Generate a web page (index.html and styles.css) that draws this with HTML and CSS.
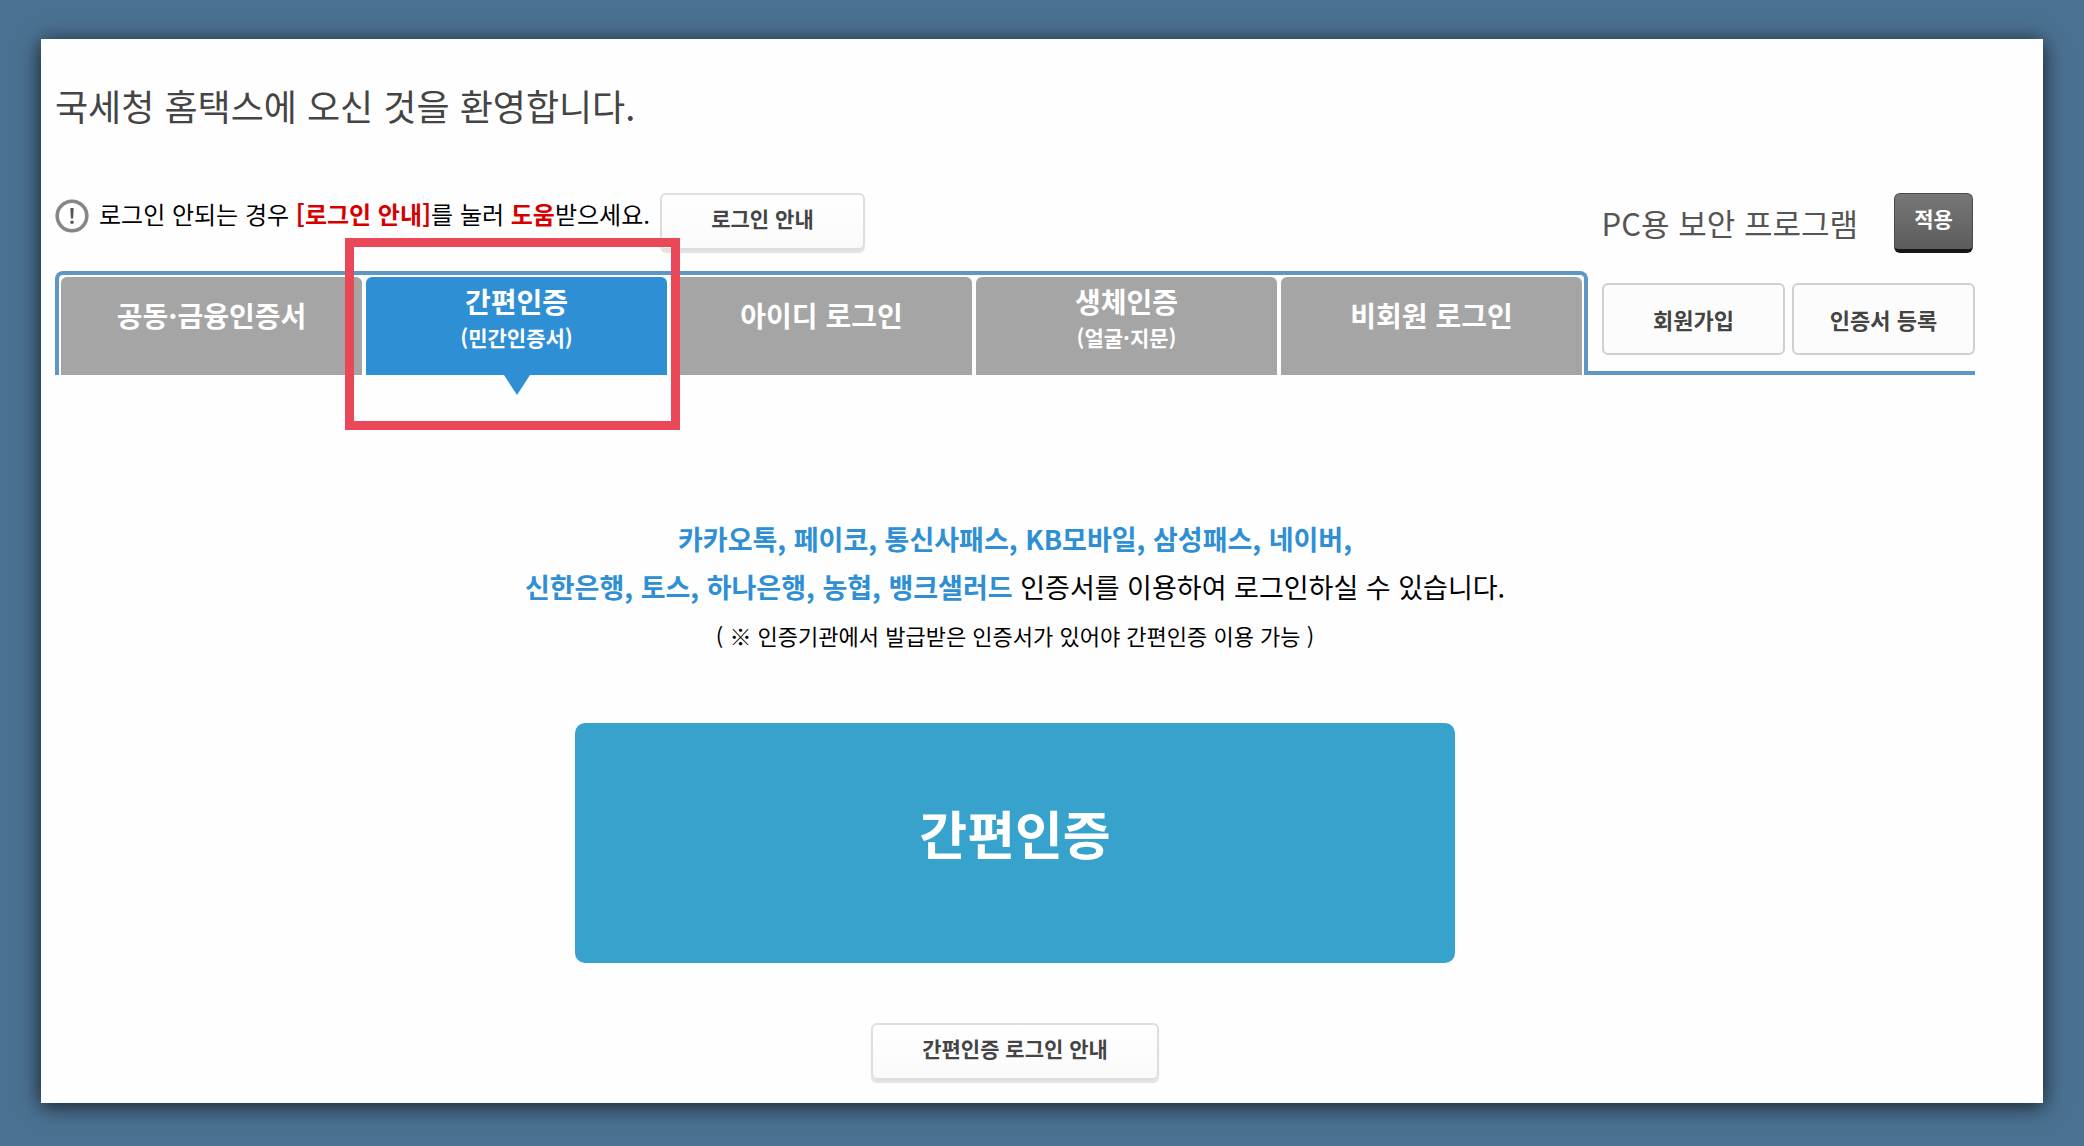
FILE: index.html
```html
<!DOCTYPE html>
<html lang="ko">
<head>
<meta charset="utf-8">
<title>국세청 홈택스 로그인</title>
<link rel="stylesheet" href="styles.css">
</head>
<body>
<main class="card">
  <h1 class="title">국세청 홈택스에 오신 것을 환영합니다.</h1>

  <div class="notice">
    <div class="notice-message">
      <svg class="notice-icon" viewBox="0 0 34 34" aria-hidden="true">
        <circle cx="17" cy="17" r="14.8" fill="none" stroke="#868686" stroke-width="3.6"/>
        <path d="M15.3 9h3.4l-.6 10.5h-2.2z" fill="#555"/>
        <circle cx="17" cy="23.3" r="1.7" fill="#555"/>
      </svg>
      <p class="notice-text">로그인 안되는 경우 <strong>[로그인 안내]</strong>를 눌러 <strong>도움</strong>받으세요.</p>
    </div>
    <button type="button" class="btn guide">로그인 안내</button>
    <span class="security">PC용 보안 프로그램</span>
    <button type="button" class="btn apply">적용</button>
  </div>

  <div class="tab-row">
    <div class="tabs" role="tablist">
      <button type="button" class="tab" role="tab">공동·금융인증서</button>
      <div class="tab-slot">
        <button type="button" class="tab double active" role="tab" aria-selected="true">간편인증<span class="sub">(민간인증서)</span></button>
        <span class="highlight"></span>
      </div>
      <button type="button" class="tab" role="tab">아이디 로그인</button>
      <button type="button" class="tab double" role="tab">생체인증<span class="sub">(얼굴·지문)</span></button>
      <button type="button" class="tab" role="tab">비회원 로그인</button>
    </div>
    <div class="side">
      <button type="button" class="btn join">회원가입</button>
      <button type="button" class="btn join">인증서 등록</button>
    </div>
  </div>

  <section class="panel">
    <p class="lead"><strong>카카오톡, 페이코, 통신사패스, KB모바일, 삼성패스, 네이버,</strong><br>
    <strong>신한은행, 토스, 하나은행, 농협, 뱅크샐러드</strong> 인증서를 이용하여 로그인하실 수 있습니다.</p>
    <p class="note">( ※ 인증기관에서 발급받은 인증서가 있어야 간편인증 이용 가능 )</p>
    <button type="button" class="auth">간편인증</button>
    <button type="button" class="btn guide wide">간편인증 로그인 안내</button>
  </section>
</main>
</body>
</html>
```
FILE: styles.css
```css
* {
  box-sizing: border-box;
}

body {
  margin: 0;
  padding: 39px 41px 43px;
  background: #4b7192;
  color: #000;
  font-family: "Noto Sans CJK KR", sans-serif;
}

button {
  margin: 0;
  padding: 0;
  border: 0;
  font-family: inherit;
  cursor: pointer;
}

p {
  margin: 0;
}

.card {
  padding: 42px 68px 20px 14px;
  background: #fefefe;
  box-shadow: 0 3px 20px rgba(0, 0, 0, 0.75);
}

.title {
  margin: 0;
  color: #444;
  font-size: 36px;
  font-weight: 400;
  line-height: 48px;
}

.notice {
  display: flex;
  align-items: center;
  margin-top: 64px;
}

.notice-message {
  display: flex;
  gap: 10px;
  padding-bottom: 14px;
}

.notice-icon {
  width: 34px;
  height: 34px;
}

.notice-text {
  font-size: 24px;
  line-height: 30px;
}

.notice-text strong {
  color: #d70000;
}

.btn {
  border: 2px solid #dedede;
  border-radius: 6px;
  background: linear-gradient(#fff, #fafafa);
  color: #444;
  font-size: 21px;
  font-weight: 700;
}

.guide {
  width: 205px;
  height: 57px;
  margin: 0 0 3px 10px;
  padding-bottom: 8px;
  box-shadow: 0 3px 1px #e3e3e3;
}

.security {
  margin-left: auto;
  color: #555;
  font-size: 31px;
  line-height: 40px;
}

.apply {
  width: 79px;
  height: 60px;
  margin-right: 2px;
  margin-left: 36px;
  padding-bottom: 8px;
  border: 1px solid #4c4c4c;
  border-bottom: 4px solid #161616;
  background: linear-gradient(#777, #5c5c5c);
  color: #fff;
}

.tab-row {
  display: flex;
  margin-top: 18px;
}

.tabs {
  display: grid;
  flex: 1;
  grid-template-columns: repeat(5, 1fr);
  gap: 4px;
  padding: 2px 2px 0;
  border: 4px solid #5f97c4;
  border-bottom: 0;
  border-radius: 8px 8px 0 0;
}

.tab-slot {
  position: relative;
}

.tab {
  display: flex;
  flex-direction: column;
  align-items: center;
  justify-content: center;
  width: 100%;
  height: 98px;
  padding-bottom: 22px;
  border-radius: 6px 6px 0 0;
  background: #a5a5a5;
  color: #fff;
  font-size: 28px;
  font-weight: 700;
  line-height: 38px;
}

.double {
  padding-bottom: 16px;
}

.active {
  background: #2f8fd4;
}

.active::after {
  content: "";
  position: absolute;
  top: 100%;
  left: 50%;
  margin-left: -13px;
  border: 13px solid transparent;
  border-top: 20px solid #2f8fd4;
  border-bottom: 0;
}

.sub {
  font-size: 21px;
  line-height: 34px;
}

.highlight {
  position: absolute;
  inset: -39px -13px -55px -21px;
  border: 9px solid #ea4858;
  pointer-events: none;
}

.side {
  display: flex;
  gap: 7px;
  padding: 12px 0 16px 14px;
  border-bottom: 4px solid #5f97c4;
}

.join {
  width: 183px;
  height: 72px;
  border-color: #d0d0d0;
  background: #fcfcfc;
  font-size: 22px;
}

.panel {
  display: flex;
  flex-direction: column;
  align-items: center;
  padding-top: 140px;
  text-align: center;
}

.lead {
  font-size: 27px;
  line-height: 48px;
}

.lead strong {
  color: #2f8fd4;
}

.note {
  font-size: 22px;
  line-height: 48px;
}

.auth {
  width: 880px;
  max-width: 100%;
  height: 240px;
  margin-top: 64px;
  padding-bottom: 22px;
  border-radius: 10px;
  background: #37a3cc;
  color: #fff;
  font-size: 52px;
  font-weight: 700;
}

.wide {
  width: 288px;
  margin: 60px 0 3px;
}
```
